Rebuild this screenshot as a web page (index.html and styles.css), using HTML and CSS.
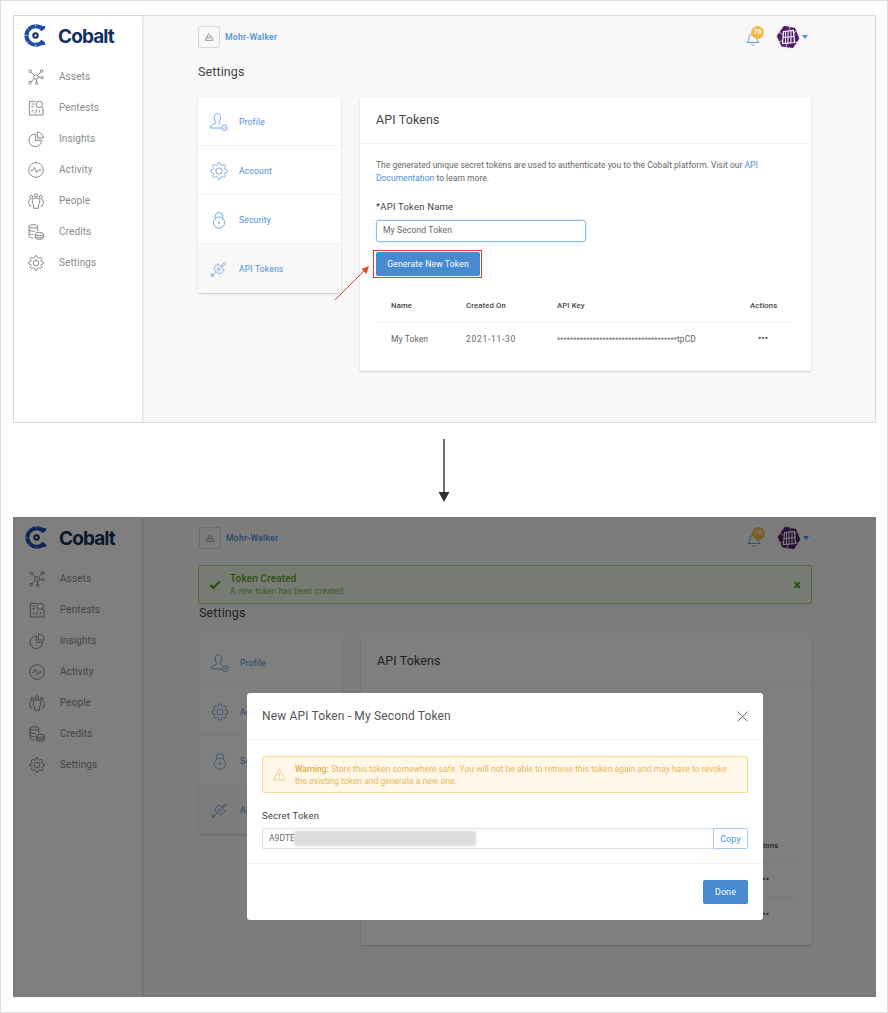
FILE: index.html
```html
<!DOCTYPE html>
<html lang="en">
<head>
<meta charset="utf-8">
<title>Cobalt API Tokens</title>
<link rel="stylesheet" href="styles.css">
</head>
<body>
<svg class="defs" width="0" height="0" aria-hidden="true">
  <symbol id="i-logo" viewBox="0 0 24 24">
    <path d="M20 6.200A9.700 9.700 0 1 0 20 17.800" fill="none" stroke="#1d4fa8" stroke-width="4.200"/>
    <path d="M3 12H.5M4.500 5.500 2.800 3.800M4.500 18.500 2.800 20.200M12 2.500V.5M12 21.500V23.500" stroke="#fff" stroke-width=".7"/>
    <path d="M16.500 2.200h5.500v2.800h-4zM16.500 21.800h5.500v-2.800h-4z" fill="#1d4fa8"/>
    <circle cx="12" cy="12" r="2.300" fill="none" stroke="#14305f" stroke-width="2.100"/>
  </symbol>
  <symbol id="i-assets" viewBox="0 0 24 24">
    <g fill="none" stroke="currentColor"><circle cx="12" cy="12" r="3.400"/><circle cx="3.500" cy="3.500" r="2"/><circle cx="20.500" cy="3" r="2"/><circle cx="3" cy="20.500" r="2"/><circle cx="13" cy="21.500" r="1.800"/><circle cx="21.500" cy="13" r="1.800"/><path d="M5 5l4.600 4.600M19 4.500l-4.600 5M4.500 19l5-4.600M12.600 15.400l.3 4.300M15.400 12.400l4.300.4"/></g>
  </symbol>
  <symbol id="i-pentests" viewBox="0 0 24 24">
    <g fill="none" stroke="currentColor"><path d="M11.500 2H2V22.500H22.500V13"/><circle cx="17" cy="6.500" r="4.800"/><path d="M20.500 10l3 3M5 6h5M5 10h3.500"/><path d="M8 15l-2 2 2 2M16 15l2 2-2 2M13 14l-2 6"/></g>
  </symbol>
  <symbol id="i-pie" viewBox="0 0 24 24">
    <g fill="none" stroke="currentColor"><path d="M11 4.500A9.500 9.500 0 1 0 20.500 14H11z"/><path d="M14 1.500A9 9 0 0 1 23 10.500H14z"/></g>
  </symbol>
  <symbol id="i-activity" viewBox="0 0 24 24">
    <g fill="none" stroke="currentColor"><circle cx="12" cy="12" r="11"/><path d="M3.500 12.500h3.500l2.500-4.500 3.500 8 2.500-4h5"/></g>
  </symbol>
  <symbol id="i-people" viewBox="0 0 24 24">
    <g fill="none" stroke="currentColor"><circle cx="12" cy="3.500" r="2.500"/><circle cx="5" cy="6" r="2.300"/><circle cx="19" cy="6" r="2.300"/><path d="M8.500 23v-5l-2-2.500V11c0-2 2-3.500 5.500-3.500s5.500 1.500 5.500 3.500v4.500l-2 2.500v5zM5 19.500H3l-2-3.500v-3.500C1 11 2 10 4 10M19 19.500h2l2-3.500v-3.500c0-1.500-1-2.500-3-2.500"/></g>
  </symbol>
  <symbol id="i-credits" viewBox="0 0 24 24">
    <g fill="none" stroke="currentColor"><ellipse cx="8" cy="3.500" rx="6.500" ry="2.500"/><path d="M1.500 3.500v15c0 1.400 2.500 2.500 6.500 2.500M1.500 8.500c0 1.400 2.500 2.500 6.500 2.500h2M1.500 13.500C1.500 15 4 16 8 16M14.500 3.500V11"/><ellipse cx="17" cy="15" rx="6" ry="2.500"/><path d="M11 15v5.500c0 1.400 2.500 2.500 6 2.500s6-1.100 6-2.500V15M11 18c0 1.400 2.500 2.500 6 2.500s6-1.100 6-2.500"/></g>
  </symbol>
  <symbol id="i-gear" viewBox="0 0 24 24">
    <g fill="none" stroke="currentColor"><circle cx="12" cy="12" r="4.200"/><path d="M19.400 15a1.650 1.650 0 0 0 .33 1.820l.06.06a2 2 0 0 1 0 2.830 2 2 0 0 1-2.830 0l-.06-.06a1.650 1.650 0 0 0-1.820-.33 1.650 1.650 0 0 0-1 1.510V21a2 2 0 0 1-2 2 2 2 0 0 1-2-2v-.09A1.650 1.650 0 0 0 9 19.400a1.650 1.650 0 0 0-1.820.33l-.06.06a2 2 0 0 1-2.830 0 2 2 0 0 1 0-2.830l.06-.06a1.650 1.650 0 0 0 .33-1.820 1.650 1.650 0 0 0-1.510-1H3a2 2 0 0 1-2-2 2 2 0 0 1 2-2h.09A1.650 1.650 0 0 0 4.600 9a1.650 1.650 0 0 0-.33-1.820l-.06-.06a2 2 0 0 1 0-2.830 2 2 0 0 1 2.830 0l.06.06a1.650 1.650 0 0 0 1.820.33H9a1.650 1.650 0 0 0 1-1.510V3a2 2 0 0 1 2-2 2 2 0 0 1 2 2v.09a1.650 1.650 0 0 0 1 1.510 1.650 1.650 0 0 0 1.820-.33l.06-.06a2 2 0 0 1 2.830 0 2 2 0 0 1 0 2.830l-.06.06a1.650 1.650 0 0 0-.33 1.820V9a1.650 1.650 0 0 0 1.510 1H21a2 2 0 0 1 2 2 2 2 0 0 1-2 2h-.09a1.650 1.650 0 0 0-1.510 1z"/></g>
  </symbol>
  <symbol id="i-profile" viewBox="0 0 24 24">
    <g fill="none" stroke="currentColor"><path d="M1 18.500c0-2.500 3-3 6-4.200.8-.4.800-1.800.2-2.500C6 10.400 5.500 8.500 5.500 6 5.500 2.800 7.300 1 9.800 1s4.200 1.800 4.200 5c0 2.500-.6 4.400-1.700 5.800-.6.700-.6 2 .2 2.500l1.500.7M1 18.500V20h13.500"/><circle cx="19" cy="19.500" r="3.800"/><path d="M17.300 19.500l1.500 1.200 2-2.400"/></g>
  </symbol>
  <symbol id="i-lock" viewBox="0 0 24 24">
    <g fill="none" stroke="currentColor"><path d="M7 10V7a5 5 0 0 1 10 0v3"/><circle cx="12" cy="15.500" r="7.500"/><path d="M12 14v3" stroke-width="1.800"/></g>
  </symbol>
  <symbol id="i-plug" viewBox="0 0 24 24">
    <g fill="none" stroke="currentColor"><path d="M10.500 5 19 13.500l-3 3c-2 2-4.800 2.100-6.400.5L7 14.400c-1.600-1.600-1.500-4.400.5-6.400z"/><path d="M14.500 8l5.500-5.500M16 9.500l5.500-5.500"/><circle cx="11.500" cy="12.500" r="1.700"/><path d="M7.500 16.500 3.500 20.500c-1 1-2.700-.3-1.700-1.600.8-1 2.400-.5 2.700.6.400 1.500-1 3-2.500 2.500"/></g>
  </symbol>
  <symbol id="i-bell" viewBox="0 0 24 24">
    <g fill="none" stroke="currentColor" stroke-width="1.500"><path d="M1.500 18c2.500-1.500 3.500-3.500 3.500-7.500C5 6 8 3 12 3s7 3 7 7.500c0 4 1 6 3.500 7.500z"/><path d="M9.500 21.500a3 2 0 0 0 5 0"/></g>
  </symbol>
  <symbol id="i-org" viewBox="0 0 24 24">
    <g fill="none" stroke="currentColor" stroke-width="1.800"><path d="M3 20 11 4l5 8 2-1 4 9z"/><path d="M7 14h9"/></g>
  </symbol>
  <symbol id="i-avatar" viewBox="0 0 24 24">
    <circle cx="12" cy="12" r="11.700" fill="#efe9f2"/>
    <path d="M8 .8 19 3 23.300 13.500 17 23 5.500 21.500.8 11z" fill="#4f1a68"/>
    <path d="M7.500 6.500 17.500 5.500 18.500 17.500 6.500 18.500z" fill="#4f1a68" stroke="#fff" stroke-width="1.200"/>
    <path d="M7 12.500 18 11.500M12 6v12.500M9.500 6.500v12M15 5.800v12" stroke="#fff" stroke-width="1"/>
    <path d="M2.500 7 7 9.500M3 17l4-1.500M20 6l-2.500 2.500M21 17.500l-3-1.500M14 2l-1 3M10 22l1-3.500" stroke="#fff" stroke-width=".7"/>
  </symbol>
  <symbol id="i-warn" viewBox="0 0 24 24">
    <g fill="none" stroke="currentColor" stroke-width="1.500"><path d="M12 2.500 23 22H1z"/><path d="M12 9v7M12 18v1.500"/></g>
  </symbol>
</svg>

<main class="frame">

  <section class="panel">
    <nav class="side">
      <div class="brand"><svg class="brand-mark"><use href="#i-logo"/></svg><span class="brand-name">Cobalt</span></div>
      <ul class="nav">
        <li class="nav-item"><svg class="nav-ico"><use href="#i-assets"/></svg>Assets</li>
        <li class="nav-item"><svg class="nav-ico"><use href="#i-pentests"/></svg>Pentests</li>
        <li class="nav-item"><svg class="nav-ico"><use href="#i-pie"/></svg>Insights</li>
        <li class="nav-item"><svg class="nav-ico"><use href="#i-activity"/></svg>Activity</li>
        <li class="nav-item"><svg class="nav-ico"><use href="#i-people"/></svg>People</li>
        <li class="nav-item"><svg class="nav-ico"><use href="#i-credits"/></svg>Credits</li>
        <li class="nav-item"><svg class="nav-ico"><use href="#i-gear"/></svg>Settings</li>
      </ul>
    </nav>
    <div class="content">
      <header class="topbar">
        <div class="org"><span class="org-box"><svg class="org-ico"><use href="#i-org"/></svg></span><span class="org-name">Mohr-Walker</span></div>
        <div class="user">
          <span class="bell"><svg class="bell-ico"><use href="#i-bell"/></svg><b class="badge">76</b></span>
          <svg class="avatar"><use href="#i-avatar"/></svg><i class="caret"></i>
        </div>
      </header>
      <h1 class="page-title">Settings</h1>
      <div class="columns">
        <ul class="menu">
          <li class="menu-item"><svg class="menu-ico"><use href="#i-profile"/></svg>Profile</li>
          <li class="menu-item"><svg class="menu-ico"><use href="#i-gear"/></svg>Account</li>
          <li class="menu-item"><svg class="menu-ico"><use href="#i-lock"/></svg>Security</li>
          <li class="menu-item is-active"><svg class="menu-ico"><use href="#i-plug"/></svg>API Tokens</li>
        </ul>
        <article class="card">
          <h2 class="card-title">API Tokens</h2>
          <div class="card-body">
            <p class="intro">The generated unique secret tokens are used to authenticate you to the Cobalt platform. Visit our <a class="link">API Documentation</a> to learn more.</p>
            <label class="label">*API Token Name</label>
            <div class="name-input">My Second Token</div>
            <div class="callout"><button class="btn btn-generate">Generate New Token</button></div>
            <div class="table">
              <div class="tr th"><span>Name</span><span>Created On</span><span>API Key</span><span>Actions</span></div>
              <div class="tr tr-raised"><span>My Token</span><span class="date">2021-11-30</span><span><span class="stars">*************************************</span>tpCD</span><span class="dots">•••</span></div>
            </div>
          </div>
          <svg class="red-arrow" width="40" height="38" viewBox="0 0 40 38"><path d="M2 36 32 6" stroke="#e2492f" fill="none"/><path d="M36 2 33.500 10 28.500 5z" fill="#e2492f"/></svg>
        </article>
      </div>
    </div>
  </section>

  <div class="flow-arrow">
    <svg width="12" height="64" viewBox="0 0 12 64"><path d="M6 0V54" stroke="#333" stroke-width="1.400"/><path d="M.5 53H11.500L6 63z" fill="#333"/></svg>
  </div>

  <section class="panel panel-dim">
    <nav class="side">
      <div class="brand"><svg class="brand-mark"><use href="#i-logo"/></svg><span class="brand-name">Cobalt</span></div>
      <ul class="nav">
        <li class="nav-item"><svg class="nav-ico"><use href="#i-assets"/></svg>Assets</li>
        <li class="nav-item"><svg class="nav-ico"><use href="#i-pentests"/></svg>Pentests</li>
        <li class="nav-item"><svg class="nav-ico"><use href="#i-pie"/></svg>Insights</li>
        <li class="nav-item"><svg class="nav-ico"><use href="#i-activity"/></svg>Activity</li>
        <li class="nav-item"><svg class="nav-ico"><use href="#i-people"/></svg>People</li>
        <li class="nav-item"><svg class="nav-ico"><use href="#i-credits"/></svg>Credits</li>
        <li class="nav-item"><svg class="nav-ico"><use href="#i-gear"/></svg>Settings</li>
      </ul>
    </nav>
    <div class="content">
      <header class="topbar">
        <div class="org"><span class="org-box"><svg class="org-ico"><use href="#i-org"/></svg></span><span class="org-name">Mohr-Walker</span></div>
        <div class="user">
          <span class="bell"><svg class="bell-ico"><use href="#i-bell"/></svg><b class="badge">76</b></span>
          <svg class="avatar"><use href="#i-avatar"/></svg><i class="caret"></i>
        </div>
      </header>
      <div class="banner">
        <svg class="banner-check" viewBox="0 0 14 11"><path d="M1.500 5.500 5 9l7.500-7.500" fill="none" stroke="#4f9a1f" stroke-width="2.400"/></svg>
        <div class="banner-text"><strong class="banner-title">Token Created</strong><span>A new token has been created.</span></div>
        <span class="banner-close">×</span>
      </div>
      <h1 class="page-title">Settings</h1>
      <div class="columns">
        <ul class="menu">
          <li class="menu-item"><svg class="menu-ico"><use href="#i-profile"/></svg>Profile</li>
          <li class="menu-item"><svg class="menu-ico"><use href="#i-gear"/></svg>Account</li>
          <li class="menu-item"><svg class="menu-ico"><use href="#i-lock"/></svg>Security</li>
          <li class="menu-item is-active"><svg class="menu-ico"><use href="#i-plug"/></svg>API Tokens</li>
        </ul>
        <article class="card">
          <h2 class="card-title">API Tokens</h2>
          <div class="card-body is-covered">
            <div class="table">
              <div class="tr th"><span></span><span></span><span></span><span>Actions</span></div>
              <div class="tr"><span></span><span></span><span></span><span class="dots">•••</span></div>
              <div class="tr"><span></span><span></span><span></span><span class="dots">•••</span></div>
            </div>
          </div>
        </article>
      </div>
    </div>
    <div class="scrim"></div>
    <div class="modal">
      <div class="modal-head"><h2 class="modal-title">New API Token - My Second Token</h2>
        <svg class="modal-close" viewBox="0 0 12 12"><path d="M.5.500l11 11M11.500.500l-11 11" stroke="#666" fill="none"/></svg></div>
      <div class="modal-body">
        <div class="warning">
          <svg class="warn-ico"><use href="#i-warn"/></svg>
          <p class="warn-text"><b class="warn-lead">Warning:</b> Store this token somewhere safe. You will not be able to retrieve this token again and may have to revoke the existing token and generate a new one.</p>
        </div>
        <label class="label label-modal">Secret Token</label>
        <div class="token-row">
          <div class="token-field">A9DTE<span class="redact"></span></div>
          <button class="btn-copy">Copy</button>
        </div>
      </div>
      <div class="modal-foot"><button class="btn btn-done">Done</button></div>
    </div>
  </section>

</main>
</body>
</html>
```

FILE: styles.css
```css
* { box-sizing: border-box; }

html, body {
  margin: 0;
  padding: 0;
  background: #fff;
}

body {
  font-family: Roboto, "Liberation Sans", sans-serif;
  color: #4a4a4a;
}

ul { list-style: none; margin: 0; padding: 0; }
h1, h2, p { margin: 0; font-weight: 400; }
button { font-family: inherit; border: 0; }

.defs { position: absolute; }

.frame {
  width: 888px;
  height: 1013px;
  border: 1px solid #dedede;
  padding: 14px 11px 0 12px;
  overflow: hidden;
}

.panel {
  position: relative;
  display: grid;
  grid-template-columns: 128px 1fr;
  height: 408px;
  border: 1px solid #dcdcdc;
  background: #f8f8f8;
}

.panel-dim {
  height: 480px;
  border: 0;
  padding-left: 2px;
  grid-template-columns: 127px 1fr;
}

.panel-dim .content { padding-left: 57px; }

.scrim {
  position: absolute;
  inset: 0;
  background: rgba(0, 0, 0, .5);
}

/* sidebar */
.side {
  background: #fff;
  box-shadow: 1px 0 2px rgba(0, 0, 0, .12);
  padding: 8px 0 0 10px;
}

.panel-dim .side { padding-top: 9px; }

.brand {
  display: flex;
  align-items: center;
  height: 23px;
  gap: 11px;
}

.brand-mark { width: 23px; height: 23px; flex: none; }

.brand-name {
  font: 700 19px/23px Inter, "Liberation Sans", sans-serif;
  color: #14305f;
  letter-spacing: -.9px;
  padding-top: 2px;
}

.nav { margin-top: 14px; }

.nav-item {
  display: flex;
  align-items: center;
  gap: 15px;
  height: 31px;
  padding-left: 4px;
  font-size: 10px;
  letter-spacing: .1px;
  color: #8a8a8a;
}

.nav-ico { width: 16px; height: 16px; color: #777; flex: none; stroke-width: 1.300; }

/* content */
.content { padding: 10px 0 0 56px; min-width: 0; }

.topbar {
  display: flex;
  justify-content: space-between;
  align-items: center;
  width: 610px;
  height: 22px;
}

.org { display: flex; align-items: center; gap: 5px; }

.org-box {
  display: flex;
  align-items: center;
  justify-content: center;
  width: 22px;
  height: 22px;
  background: #f8f8f8;
  border: 1px solid #d8d8d8;
  border-radius: 2px;
}

.org-ico { width: 10px; height: 10px; color: #777; }

.org-name { font-size: 8.700px; font-weight: 500; color: #4a90d9; letter-spacing: .2px; }

.user { display: flex; align-items: center; }

.bell { position: relative; display: block; width: 14px; height: 16px; margin-right: 16px; }
.bell-ico { display: block; width: 14px; height: 16px; color: #4a90d9; margin-top: 2px; }

.badge {
  position: absolute;
  top: -3px;
  left: 5px;
  width: 13px;
  height: 13px;
  border-radius: 50%;
  background: #f3ba48;
  color: #fff;
  font-size: 7px;
  font-weight: 700;
  line-height: 13px;
  text-align: center;
}

.avatar { width: 24px; height: 24px; }

.caret {
  width: 0;
  height: 0;
  margin-left: 2px;
  border: 3px solid transparent;
  border-top: 4px solid #4a90d9;
  border-bottom: 0;
}

.page-title {
  margin-top: 16px;
  font-size: 12.500px;
  line-height: 16px;
  letter-spacing: .1px;
  color: #444;
}

.banner {
  display: flex;
  align-items: center;
  width: 614px;
  height: 39px;
  margin: 16px 0 -15px -1px;
  padding: 0 10px 0 10px;
  background: #eef6e6;
  border: 1px solid #a3d477;
  border-radius: 2px;
  font-size: 8.200px;
  color: #7bb84a;
}

.banner-check { width: 12px; height: 10px; flex: none; margin-right: 9px; }
.banner-text { display: flex; flex-direction: column; gap: 2px; flex: 1; letter-spacing: .15px; }
.banner-title { font-size: 10px; font-weight: 500; color: #5ea31f; }
.banner-close { color: #4f9a1f; font-size: 14px; font-weight: 700; line-height: 1; }

.columns {
  display: flex;
  align-items: flex-start;
  gap: 19px;
  margin-top: 17px;
}

/* left menu */
.menu {
  width: 143px;
  background: #fff;
  border-radius: 2px;
  box-shadow: 0 1px 2px rgba(0, 0, 0, .2);
  overflow: hidden;
}

.menu-item {
  display: flex;
  align-items: center;
  gap: 11px;
  height: 49px;
  padding: 1px 0 0 12px;
  border-bottom: 1px solid #f3f3f3;
  font-size: 8.600px;
  letter-spacing: .15px;
  color: #4a90d9;
}

.menu-item.is-active { background: #f8f8f8; border-bottom: 0; }

.menu-ico { width: 18px; height: 18px; color: #6aa3e0; flex: none; stroke-width: 1.200; }

/* card */
.card {
  position: relative;
  width: 451px;
  background: #fff;
  border-radius: 2px;
  box-shadow: 0 1px 2px rgba(0, 0, 0, .2);
}

.card-title {
  height: 47px;
  padding: 15px 16px 0;
  border-bottom: 1px solid #f3f3f3;
  font-size: 12.500px;
  line-height: 16px;
  letter-spacing: .1px;
  color: #444;
}

.card-body { padding: 15px 15px 14px 16px; }

.card-body.is-covered { padding-top: 133px; }

.intro { font-size: 8.500px; line-height: 13px; color: #666; letter-spacing: .02px; width: 400px; }

.link { color: #4a90d9; }

.label { display: block; margin-top: 16px; font-size: 9.500px; line-height: 12px; letter-spacing: .2px; color: #444; }

.name-input {
  width: 210px;
  height: 22px;
  margin-top: 7px;
  padding-left: 6px;
  border: 1.500px solid #8cbbe9;
  border-radius: 3px;
  box-shadow: 0 0 2px rgba(74, 144, 217, .4);
  font-size: 8.600px;
  line-height: 19px;
  letter-spacing: .1px;
  color: #666;
}

.callout {
  width: 109px;
  margin: 8px 0 0 -3px;
  padding: 1px 1px 1px 2px;
  border: 1px solid #d9412c;
}

.btn {
  display: block;
  background: #478ad0;
  color: #fff;
  border-radius: 2px;
  font-size: 8.600px;
  letter-spacing: .15px;
}

.btn-generate { width: 104px; height: 24px; padding: 0; }

.table { margin-top: 11px; }

.tr {
  display: grid;
  grid-template-columns: 75px 91px 193px 1fr;
  align-items: center;
  height: 34px;
  padding-left: 15px;
  border-bottom: 1px solid #f3f3f3;
  font-size: 8.500px;
  color: #666;
  letter-spacing: .1px;
  white-space: nowrap;
}

.tr:last-child { border-bottom: 0; }

.tr-raised { padding-bottom: 3px; }

.tr.th { height: 34px; padding-bottom: 1px; font-size: 7.800px; font-weight: 500; color: #444; }

.date { letter-spacing: .7px; }

.stars { font-size: 7.300px; }

.dots { font-size: 10px; letter-spacing: 0; padding-left: 8px; color: #555; }

.red-arrow { position: absolute; left: -27px; top: 167px; }

/* flow arrow */
.flow-arrow {
  display: flex;
  justify-content: center;
  height: 94px;
  padding: 16px 1px 0 0;
}

/* modal */
.modal {
  position: absolute;
  left: 234px;
  top: 176px;
  width: 516px;
  height: 227px;
  display: flex;
  flex-direction: column;
  background: #fff;
  border-radius: 3px;
}

.modal-head {
  display: flex;
  align-items: center;
  justify-content: space-between;
  height: 47px;
  padding: 0 15px;
  border-bottom: 1px solid #f3f3f3;
}

.modal-title { font-size: 12px; letter-spacing: .15px; color: #555; }

.modal-close { width: 11px; height: 11px; }

.modal-body {
  flex: none;
  height: 124px;
  padding: 16px 15px 0;
  border-bottom: 1px solid #f3f3f3;
}

.warning {
  display: flex;
  align-items: center;
  height: 37px;
  padding-left: 10px;
  background: #fff7e8;
  border: 1px solid #f8dc94;
  border-radius: 2px;
}

.warn-ico { width: 13px; height: 13px; color: #e9c56e; flex: none; margin-right: 9px; }

.warn-text { font-size: 8.500px; line-height: 12px; color: #e6b95a; letter-spacing: .02px; width: 440px; }

.warn-lead { font-weight: 500; color: #e0ac40; }

.label-modal { margin-top: 17px; font-size: 9.500px; }

.token-row { display: flex; margin-top: 6px; }

.token-field {
  position: relative;
  flex: 1;
  height: 21px;
  padding-left: 6px;
  border: 1px solid #e0e0e0;
  border-right: 0;
  border-radius: 2px 0 0 2px;
  font-size: 8.600px;
  line-height: 19px;
  color: #666;
}

.redact {
  position: absolute;
  left: 31px;
  top: 2px;
  width: 182px;
  height: 15px;
  border-radius: 2px;
  background: #dcdcdc;
  filter: blur(1px);
}

.btn-copy {
  width: 35px;
  height: 21px;
  padding: 0;
  background: #fff;
  border: 1px solid #a8cbed;
  border-radius: 0 2px 2px 0;
  color: #4a90d9;
  font-size: 8.800px;
  letter-spacing: .2px;
}

.modal-foot { display: flex; justify-content: flex-end; padding: 16px 15px 0; }

.btn-done { width: 45px; height: 24px; padding: 0; font-size: 8.800px; }
```
